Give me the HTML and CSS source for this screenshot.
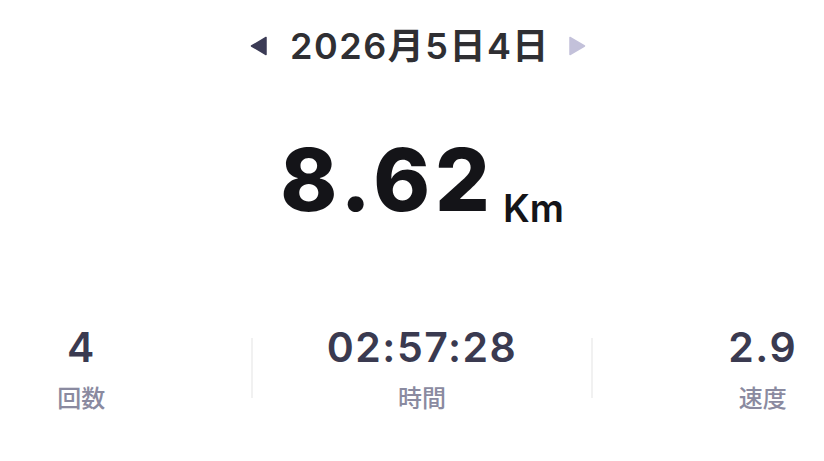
FILE: index.html
```html
<!DOCTYPE html>
<html lang="ja">
<head>
  <meta charset="UTF-8" />
  <meta name="viewport" content="width=device-width, initial-scale=1.0"/>
  <title>Daily Walk</title>
  <link rel="stylesheet" href="styles.css">
</head>
<body>
  <main class="summary">
    <div class="date-nav">
      <button class="arrow prev" aria-label="prev">
        <svg width="18" height="20" viewBox="0 0 18 20"><path d="M1.5 10 L16 1.5 L16 18.5 Z" fill="#3b3b55" stroke="#3b3b55" stroke-width="1.5" stroke-linejoin="round"/></svg>
      </button>
      <h1 class="date">2026月5日4日</h1>
      <button class="arrow next" aria-label="next">
        <svg width="18" height="20" viewBox="0 0 18 20"><path d="M16.5 10 L2 1.5 L2 18.5 Z" fill="#c3c1da" stroke="#c3c1da" stroke-width="1.5" stroke-linejoin="round"/></svg>
      </button>
    </div>

    <div class="distance">
      <span class="distance-value">8.62</span>
      <span class="distance-unit">Km</span>
    </div>

    <div class="stats">
      <div class="stat">
        <div class="stat-value">4</div>
        <div class="stat-label">回数</div>
      </div>
      <div class="stat-divider"></div>
      <div class="stat">
        <div class="stat-value">02:57:28</div>
        <div class="stat-label">時間</div>
      </div>
      <div class="stat-divider"></div>
      <div class="stat">
        <div class="stat-value">2.9</div>
        <div class="stat-label">速度</div>
      </div>
    </div>
  </main>
</body>
</html>
```

FILE: styles.css
```css
body, html {
  margin: 0;
  padding: 0;
  background-color: #fff;
  font-family: 'Inter', 'Noto Sans CJK JP', sans-serif;
  overflow: hidden;
}
.summary {
  width: 824px;
  height: 461px;
  overflow: hidden;
}
.date-nav {
  display: flex;
  justify-content: center;
  align-items: center;
  padding-top: 26px;
  margin-left: 12px;
}
.arrow {
  background: none;
  border: none;
  padding: 0;
  display: flex;
  cursor: pointer;
}
.date {
  margin: 0 18px 0 22px;
  font-family: 'Inter', 'Noto Sans CJK JP', sans-serif;
  font-size: 36px;
  font-weight: 600;
  line-height: 40px;
  color: #2f2f33;
  letter-spacing: 1.5px;
}
.distance {
  display: flex;
  justify-content: center;
  align-items: flex-end;
  margin-top: 71px;
  margin-left: 20px;
}
.distance-value {
  font-size: 86px;
  font-weight: 800;
  line-height: 86px;
  color: #141418;
  letter-spacing: 5px;
}
.distance-unit {
  font-size: 38px;
  font-weight: 600;
  line-height: 30px;
  color: #141418;
  margin-left: 8px;
}
.stats {
  display: flex;
  align-items: center;
  width: 1020px;
  margin-left: -88px;
  margin-top: 102px;
}
.stat {
  flex: 1;
  text-align: center;
}
.stat-divider {
  width: 2px;
  height: 60px;
  background-color: #f1f1f1;
}
.stat-value {
  font-size: 41px;
  font-weight: 600;
  line-height: 44px;
  color: #3a3a50;
  letter-spacing: 1.5px;
}
.stat-label {
  margin-top: 14px;
  font-family: 'Noto Sans CJK JP', sans-serif;
  font-size: 24px;
  font-weight: 500;
  line-height: 28px;
  color: #8a8aa0;
}
```
